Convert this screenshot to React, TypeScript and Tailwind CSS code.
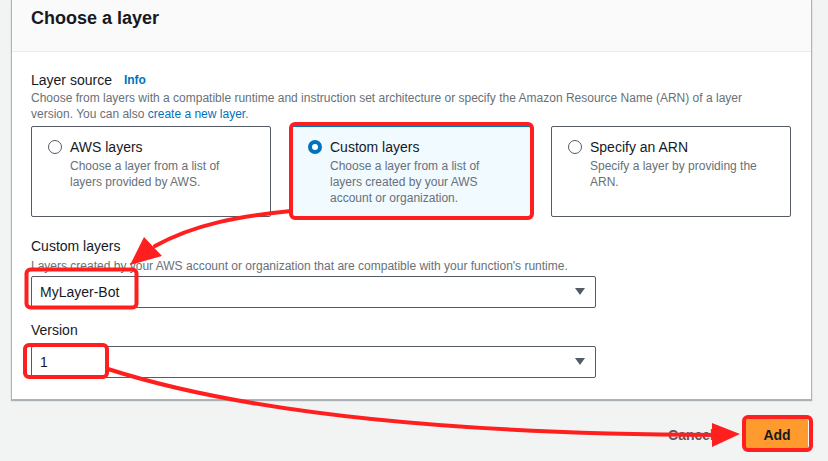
import React from 'react';

function Radio({ checked }: { checked?: boolean }) {
  return checked ? (
    <span className="mt-[3px] w-[14px] h-[14px] rounded-full bg-[#0073bb] flex items-center justify-center shrink-0">
      <span className="w-[6px] h-[6px] rounded-full bg-white" />
    </span>
  ) : (
    <span className="mt-[3px] w-[14px] h-[14px] rounded-full border border-[#545b64] bg-white shrink-0" />
  );
}

function Tile({ title, desc, checked }: { title: string; desc: string; checked?: boolean }) {
  return (
    <div
      className={
        checked
          ? 'w-[240px] h-[91px] border border-[#0073bb] bg-[#f1faff] rounded-[2px] pl-[16px] pr-[14px] pt-[10px] flex gap-[8px]'
          : 'w-[240px] h-[91px] border border-[#545b64] bg-white rounded-[2px] pl-[16px] pr-[14px] pt-[10px] flex gap-[8px]'
      }
    >
      <Radio checked={checked} />
      <div>
        <div className="text-[14px] leading-[20px] text-[#16191f]">{title}</div>
        <div className="max-w-[180px] text-[12px] leading-[16px] text-[#687078] mt-[1px]">{desc}</div>
      </div>
    </div>
  );
}

function Select({ value }: { value: string }) {
  return (
    <div className="w-[565px] h-[32px] border border-[#545b64] rounded-[2px] bg-white flex items-center justify-between pl-[8px] pr-[10px]">
      <span className="text-[14px] text-[#16191f]">{value}</span>
      <svg width="10" height="8" viewBox="0 0 10 8">
        <path d="M0 0 H10 L5 7 Z" fill="#545b64" />
      </svg>
    </div>
  );
}

export default function App() {
  return (
    <div className="relative w-[828px] h-[461px] overflow-hidden bg-[#f2f3f3] font-['Liberation_Sans',Arial,sans-serif]">
      <div className="flex flex-col">
        {/* Card */}
        <div className="ml-[11px] w-[801px] h-[400px] bg-white border-x border-b border-[#aab7b8] shadow-[0_1px_1px_0_rgba(0,28,36,0.3)]">
          <div className="h-[52px] bg-[#fafafa] border-b border-[#eaeded] pl-[19px] pt-[6px]">
            <h2 className="text-[18px] font-bold text-[#16191f] leading-[24px]">Choose a layer</h2>
          </div>
          <div className="pl-[19px] pt-[18px]">
            <div className="flex items-center gap-[12px] h-[20px]">
              <span className="text-[14px] text-[#16191f]">Layer source</span>
              <span className="text-[12px] font-bold text-[#0073bb]">Info</span>
            </div>
            <p className="text-[12px] leading-[16px] text-[#687078] w-[740px]">
              Choose from layers with a compatible runtime and instruction set architecture or specify the Amazon Resource Name (ARN) of a layer version. You can also <a className="text-[#0073bb]">create a new layer</a>.
            </p>
            <div className="flex gap-[20px] mt-[4px]">
              <Tile title="AWS layers" desc="Choose a layer from a list of layers provided by AWS." />
              <Tile title="Custom layers" desc="Choose a layer from a list of layers created by your AWS account or organization." checked />
              <Tile title="Specify an ARN" desc="Specify a layer by providing the ARN." />
            </div>
            <div className="mt-[19px] text-[14px] leading-[20px] text-[#16191f]">Custom layers</div>
            <div className="text-[12px] leading-[16px] text-[#687078] mt-[2px]">
              Layers created by your AWS account or organization that are compatible with your function's runtime.
            </div>
            <div className="mt-[2px]">
              <Select value="MyLayer-Bot" />
            </div>
            <div className="mt-[12px] text-[14px] leading-[20px] text-[#16191f]">Version</div>
            <div className="mt-[6px]">
              <Select value="1" />
            </div>
          </div>
        </div>
        {/* Footer */}
        <div className="flex justify-end items-center gap-[32px] pr-[20px] mt-[19px]">
          <span className="text-[14px] font-bold text-[#545b64]">Cancel</span>
          <button className="h-[32px] w-[62px] bg-[#ff9a2e] rounded-[2px] text-[14px] font-bold text-[#16191f]">Add</button>
        </div>
      </div>

      {/* Annotations */}
      <svg className="absolute inset-0 pointer-events-none" width="828" height="461" viewBox="0 0 828 461">
        <g fill="none" stroke="#ff1f1f" strokeWidth="4" strokeLinecap="round">
          <rect x="291" y="124" width="241" height="94" rx="4" />
          <rect x="26.5" y="269.5" width="110" height="38" rx="4" />
          <rect x="25" y="345" width="82" height="32" rx="4" />
          <rect x="744" y="417" width="67" height="33" rx="4" />
          <path d="M291 211 C240 216 195 224 155 246" />
          <path d="M108 369 C220 405 400 434 716 435" />
        </g>
        <g fill="#ff1f1f">
          <polygon points="130,265 144,237 162,256" />
          <polygon points="740,434 712,423 712,447" />
        </g>
      </svg>
    </div>
  );
}
